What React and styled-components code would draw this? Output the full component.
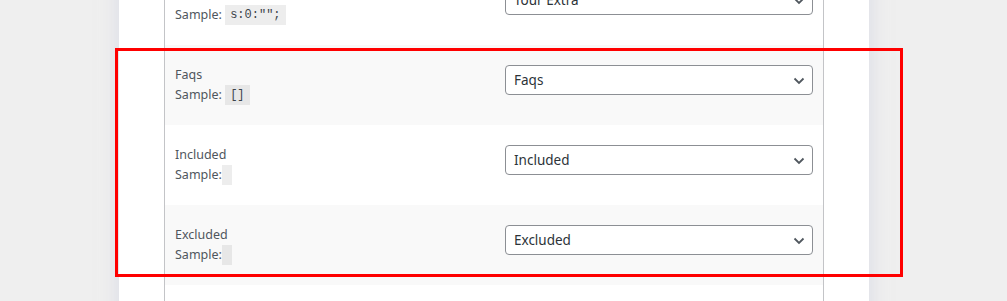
import React from "react";
import styled, { createGlobalStyle } from "styled-components";

const GlobalStyle = createGlobalStyle`
	html, body {
		margin: 0;
		padding: 0;
		height: 100%;
		overflow: hidden;
		background: #efefef;
	}
	#root {
		height: 100%;
	}
`;

const rows = [
	{ title: "Tour Extra", sample: 's:0:"";', value: "Tour Extra" },
	{ title: "Faqs", sample: "[]", value: "Faqs", alt: true },
	{ title: "Included", sample: "", value: "Included" },
	{ title: "Excluded", sample: "", value: "Excluded", alt: true },
];

const App = () => {
	return (
		<Page>
			<GlobalStyle />
			<Panel>
				<Table>
					{rows.map((row) => (
						<Row key={row.title} $alt={row.alt}>
							<LabelCell>
								<div>{row.title}</div>
								<div>
									Sample:{row.sample ? " " : ""}
									<Code>{row.sample}</Code>
								</div>
							</LabelCell>
							<FieldCell>
								<SelectWrap>
									<Select defaultValue={row.value}>
										<option>{row.value}</option>
									</Select>
									<Chevron viewBox="0 0 12 8" aria-hidden="true">
										<polyline points="1.5,1.5 6,6 10.5,1.5" />
									</Chevron>
								</SelectWrap>
							</FieldCell>
						</Row>
					))}
				</Table>
			</Panel>
			<Highlight />
		</Page>
	);
};

const Page = styled.div`
	position: relative;
	display: flow-root;
	height: 100%;
	font-family: "Noto Sans", "Open Sans", sans-serif;
`;

const Panel = styled.div`
	width: 750px;
	min-height: 420px;
	margin: -35px 0 0 119px;
	padding: 0 45px;
	box-sizing: border-box;
	background: #fff;
	box-shadow: 0 0 18px rgba(196, 202, 220, 0.55);
`;

const Table = styled.div`
	display: flex;
	flex-direction: column;
	min-height: 420px;
	border-left: 1px solid #c3c4c7;
	border-right: 1px solid #c3c4c7;
`;

const Row = styled.div`
	display: grid;
	grid-template-columns: 330px 1fr;
	align-items: start;
	background: ${({ $alt }) => ($alt ? "#f9f9f9" : "#fff")};
`;

const LabelCell = styled.div`
	padding: 20px 10px;
	font-size: 12.5px;
	line-height: 20px;
	color: #4f565d;
`;

const Code = styled.code`
	display: inline-block;
	vertical-align: top;
	min-height: 20px;
	padding: 0 5px;
	background: rgba(0, 0, 0, 0.07);
	font-family: "Liberation Mono", "DejaVu Sans Mono", monospace;
	font-size: 12px;
	line-height: 20px;
	color: #3c434a;
`;

const FieldCell = styled.div`
	padding: 20px 10px;
`;

const SelectWrap = styled.div`
	position: relative;
`;

const Select = styled.select`
	display: block;
	width: 100%;
	height: 30px;
	margin: 0;
	padding: 0 24px 0 8px;
	border: 1px solid #8c8f94;
	border-radius: 4px;
	background: #fff;
	appearance: none;
	font-family: "Noto Sans", "Open Sans", sans-serif;
	font-size: 13.5px;
	color: #2c3338;
	outline: none;
`;

const Chevron = styled.svg`
	position: absolute;
	right: 8px;
	top: 12px;
	width: 12px;
	height: 8px;
	fill: none;
	stroke: #50575e;
	stroke-width: 1.8;
	pointer-events: none;
`;

const Highlight = styled.div`
	position: absolute;
	left: 115px;
	top: 48px;
	width: 788px;
	height: 229px;
	box-sizing: border-box;
	border: 3px solid #ff0000;
	pointer-events: none;
`;

export default App;
